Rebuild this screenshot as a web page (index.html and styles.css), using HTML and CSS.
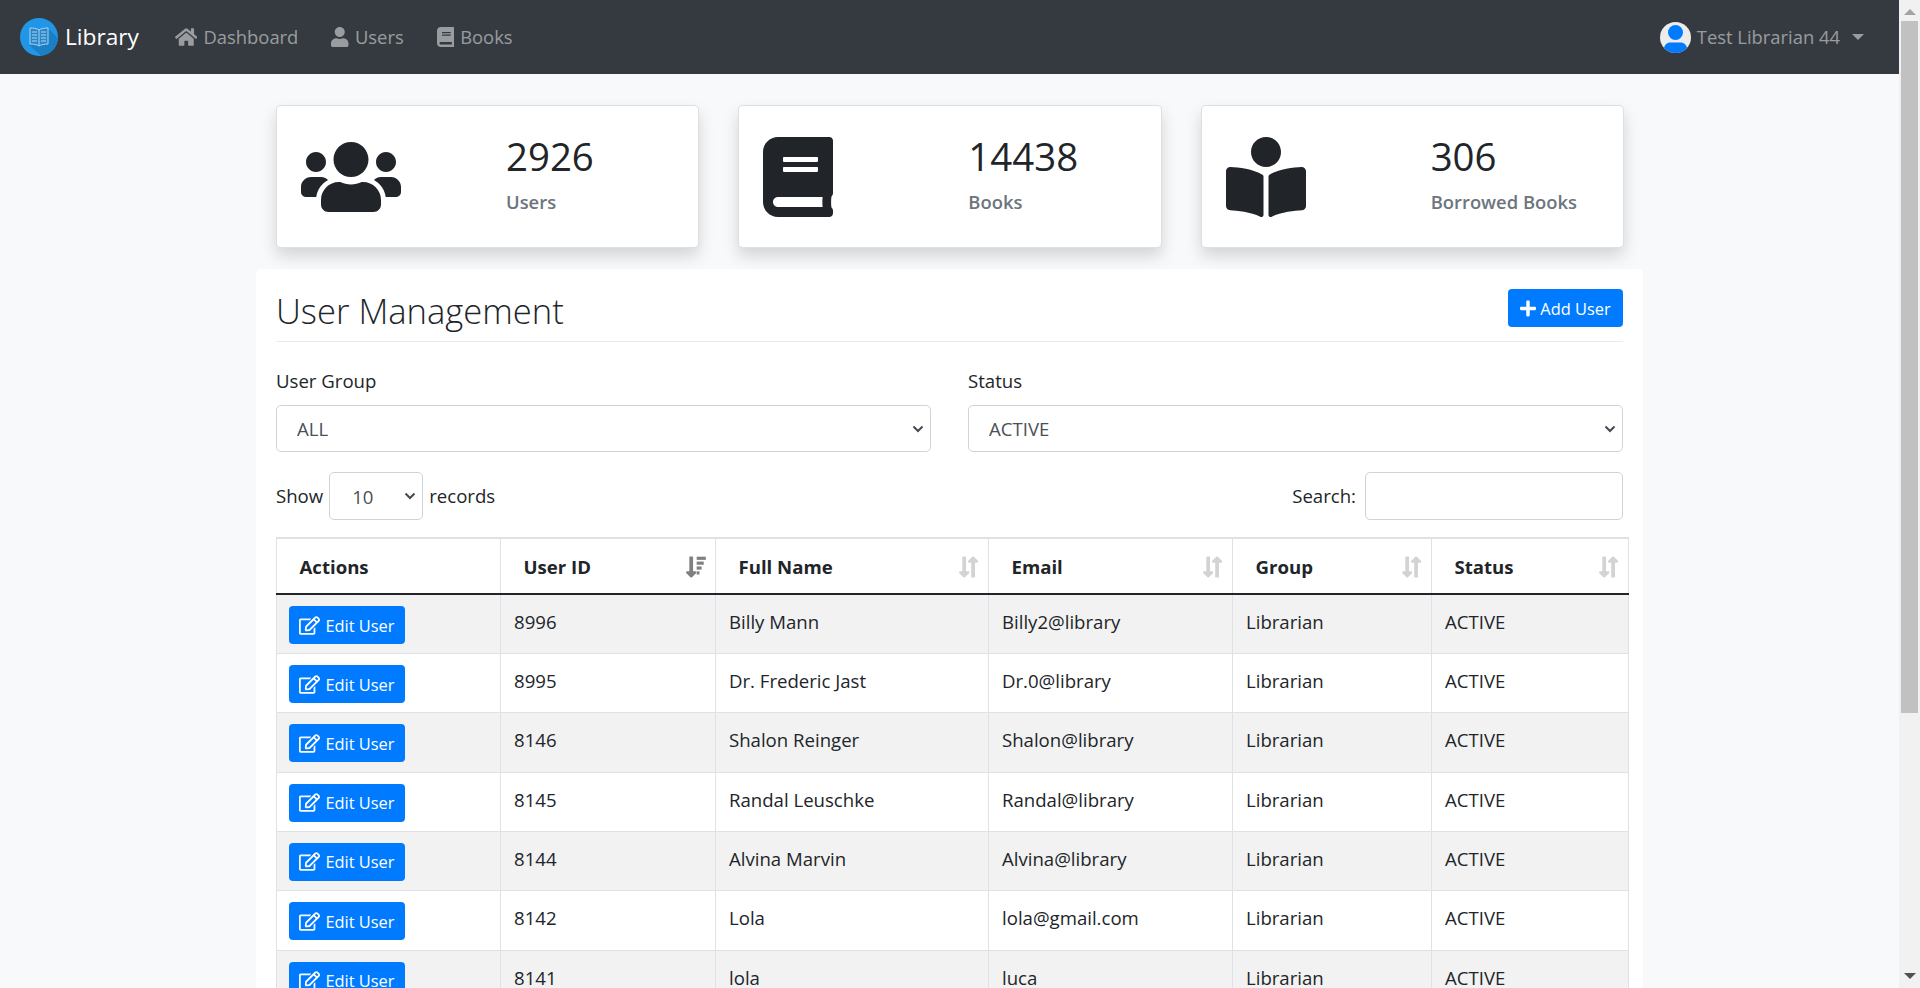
FILE: index.html
```html
<!doctype html>
<html>
<head>
<meta charset="utf-8">
<title>Library</title>
<link rel="stylesheet" href="styles.css">
</head>
<body>
<div class="page">
	<nav class="navbar">
		<a class="brand">
			<svg class="logo" viewBox="0 0 38 38">
				<defs><clipPath id="logoClip"><circle cx="19" cy="19" r="19"/></clipPath></defs>
				<circle cx="19" cy="19" r="19" fill="#2196e6"/>
				<path clip-path="url(#logoClip)" d="M9 27L29 11L42 24L26 42Z" fill="#1b7fc6"/>
				<path d="M19 12c-2-1.500-6-2-9-2v16c3 0 7 .5 9 2c2-1.500 6-2 9-2V10c-3 0-7 .5-9 2z" fill="#2a86c8" stroke="#a9d6f2" stroke-width="1"/>
				<path d="M19 12v16M12 14h5M12 17h5M12 20h5M12 23h5M21 14h5M21 17h5M21 20h5M21 23h5" fill="none" stroke="#a9d6f2" stroke-width="1"/>
			</svg>
			<span>Library</span>
		</a>
		<a class="nav-link">
			<svg class="nav-icon" viewBox="0 0 576 512"><path d="M280.37 148.26L96 300.11V464a16 16 0 0 0 16 16l112.06-.29a16 16 0 0 0 15.92-16V368a16 16 0 0 1 16-16h64a16 16 0 0 1 16 16v95.64a16 16 0 0 0 16 16.05L464 480a16 16 0 0 0 16-16V300L295.67 148.26a12.19 12.19 0 0 0-15.3 0zM571.6 251.47L488 182.56V44.05a12 12 0 0 0-12-12h-56a12 12 0 0 0-12 12v72.61L318.47 43a48 48 0 0 0-61 0L4.34 251.47a12 12 0 0 0-1.6 16.9l25.5 31A12 12 0 0 0 45.15 301l235.22-193.74a12.19 12.19 0 0 1 15.3 0L530.9 301a12 12 0 0 0 16.9-1.6l25.5-31a12 12 0 0 0-1.7-16.93z"/></svg>
			Dashboard
		</a>
		<a class="nav-link">
			<svg class="nav-icon" viewBox="0 0 448 512"><path d="M224 256c70.700 0 128-57.300 128-128S294.700 0 224 0 96 57.300 96 128s57.300 128 128 128zm89.600 32h-16.700c-22.200 10.200-46.900 16-72.900 16s-50.600-5.800-72.900-16h-16.700C60.200 288 0 348.200 0 422.400V464c0 26.500 21.500 48 48 48h352c26.500 0 48-21.500 48-48v-41.600c0-74.200-60.200-134.400-134.400-134.400z"/></svg>
			Users
		</a>
		<a class="nav-link">
			<svg class="nav-icon" viewBox="0 0 448 512"><path d="M448 360V24c0-13.300-10.700-24-24-24H96C43 0 0 43 0 96v320c0 53 43 96 96 96h328c13.300 0 24-10.700 24-24v-16c0-7.500-3.500-14.300-8.900-18.700-4.200-15.400-4.200-59.300 0-74.700 5.400-4.300 8.900-11.100 8.900-18.600zM128 134c0-3.300 2.700-6 6-6h212c3.300 0 6 2.700 6 6v20c0 3.300-2.700 6-6 6H134c-3.300 0-6-2.700-6-6v-20zm0 64c0-3.300 2.700-6 6-6h212c3.300 0 6 2.700 6 6v20c0 3.300-2.700 6-6 6H134c-3.300 0-6-2.700-6-6v-20zm253.400 250H96c-17.700 0-32-14.300-32-32 0-17.600 14.400-32 32-32h285.400c-1.900 17.100-1.900 46.900 0 64z"/></svg>
			Books
		</a>
		<a class="nav-user">
			<svg class="avatar" viewBox="0 0 31 31">
				<defs><clipPath id="avatarClip"><circle cx="15.500" cy="15.500" r="15.500"/></clipPath></defs>
				<circle cx="15.500" cy="15.500" r="15.500" fill="#ececec"/>
				<circle cx="15.500" cy="10.500" r="7.500" fill="#007bff"/>
				<path clip-path="url(#avatarClip)" d="M4 31v-4c0-4 3-6.500 6.500-6.500h10c3.500 0 6.500 2.500 6.500 6.500v4z" fill="#007bff"/>
			</svg>
			<span>Test Librarian 44</span>
			<i class="caret"></i>
		</a>
	</nav>

	<main class="content">
		<section class="stats">
			<div class="stat-card">
				<div class="stat-icon">
					<svg viewBox="0 0 640 512"><path d="M96 224c35.300 0 64-28.700 64-64s-28.700-64-64-64-64 28.700-64 64 28.700 64 64 64zm448 0c35.300 0 64-28.700 64-64s-28.700-64-64-64-64 28.700-64 64 28.700 64 64 64zm32 32h-64c-17.600 0-33.500 7.100-45.100 18.600 40.300 22.100 68.900 62 75.100 109.400h66c17.700 0 32-14.300 32-32v-32c0-35.300-28.700-64-64-64zm-256 0c61.900 0 112-50.100 112-112S381.900 32 320 32 208 82.100 208 144s50.100 112 112 112zm76.800 32h-8.300c-20.800 10-43.900 16-68.500 16s-47.600-6-68.500-16h-8.300C179.600 288 128 339.600 128 403.200V432c0 26.500 21.500 48 48 48h288c26.500 0 48-21.500 48-48v-28.800c0-63.600-51.600-115.200-115.200-115.200zm-223.700-13.400C161.500 263.100 145.600 256 128 256H64c-35.300 0-64 28.700-64 64v32c0 17.700 14.300 32 32 32h65.900c6.300-47.400 34.900-87.300 75.200-109.400z"/></svg>
				</div>
				<div class="stat-text">
					<div class="stat-num">2926</div>
					<div class="stat-label">Users</div>
				</div>
			</div>
			<div class="stat-card">
				<div class="stat-icon">
					<svg viewBox="0 0 448 512"><path d="M448 360V24c0-13.300-10.700-24-24-24H96C43 0 0 43 0 96v320c0 53 43 96 96 96h328c13.300 0 24-10.700 24-24v-16c0-7.500-3.500-14.300-8.900-18.700-4.200-15.400-4.200-59.300 0-74.700 5.400-4.300 8.900-11.100 8.900-18.600zM128 134c0-3.300 2.700-6 6-6h212c3.300 0 6 2.700 6 6v20c0 3.300-2.700 6-6 6H134c-3.300 0-6-2.700-6-6v-20zm0 64c0-3.300 2.700-6 6-6h212c3.300 0 6 2.700 6 6v20c0 3.300-2.700 6-6 6H134c-3.300 0-6-2.700-6-6v-20zm253.400 250H96c-17.700 0-32-14.300-32-32 0-17.600 14.400-32 32-32h285.400c-1.900 17.100-1.900 46.900 0 64z"/></svg>
				</div>
				<div class="stat-text">
					<div class="stat-num">14438</div>
					<div class="stat-label">Books</div>
				</div>
			</div>
			<div class="stat-card">
				<div class="stat-icon">
					<svg viewBox="0 0 512 512"><path d="M352 96c0-53.020-42.980-96-96-96s-96 42.980-96 96 42.980 96 96 96 96-42.980 96-96zM233.590 241.100c-59.330-36.320-155.430-46.300-203.790-49.050C13.550 191.130 0 203.510 0 219.140v222.800c0 14.330 11.590 26.280 26.490 27.050 43.660 2.290 131.990 10.680 193.040 41.430 9.370 4.720 20.480-1.710 20.480-11.870V252.560c-.01-4.670-2.320-8.950-6.420-11.460zm248.610-49.050c-48.350 2.740-144.460 12.730-203.780 49.050-4.100 2.510-6.410 6.960-6.410 11.630v245.790c0 10.190 11.140 16.630 20.540 11.900 61.040-30.720 149.320-39.110 192.970-41.400 14.900-.78 26.490-12.730 26.490-27.060V219.140c-.01-15.630-13.560-28.010-29.810-27.090z"/></svg>
				</div>
				<div class="stat-text">
					<div class="stat-num">306</div>
					<div class="stat-label">Borrowed Books</div>
				</div>
			</div>
		</section>

		<section class="panel">
			<div class="panel-head">
				<h1>User Management</h1>
				<button class="btn btn-add">
					<svg class="btn-icon plus" viewBox="0 0 448 512"><path d="M416 208H272V64c0-17.670-14.330-32-32-32h-32c-17.670 0-32 14.330-32 32v144H32c-17.670 0-32 14.330-32 32v32c0 17.670 14.330 32 32 32h144v144c0 17.670 14.330 32 32 32h32c17.670 0 32-14.330 32-32V304h144c17.670 0 32-14.330 32-32v-32c0-17.670-14.330-32-32-32z"/></svg>
					Add User
				</button>
			</div>

			<div class="filters">
				<label class="filter">
					<span>User Group</span>
					<select class="field"><option>ALL</option></select>
				</label>
				<label class="filter">
					<span>Status</span>
					<select class="field"><option>ACTIVE</option></select>
				</label>
			</div>

			<div class="table-tools">
				<label class="length">Show <select class="field field-small"><option>10</option></select> records</label>
				<label class="search">Search: <input class="field field-search" type="text"></label>
			</div>

			<table class="users">
				<colgroup>
					<col class="c1"><col class="c2"><col class="c3"><col class="c4"><col class="c5"><col class="c6">
				</colgroup>
				<thead>
					<tr>
						<th>Actions</th>
						<th><div class="th-in">User ID <svg class="sort sorted" viewBox="0 0 440 512"><path d="M168 345.941V44c0-6.627-5.373-12-12-12h-56c-6.627 0-12 5.373-12 12v301.941H41.941c-21.382 0-32.090 25.851-16.971 40.971l86.059 86.059c9.373 9.373 24.569 9.373 33.941 0l86.059-86.059c15.119-15.119 4.411-40.971-16.971-40.971H168z"/><rect x="245" y="36" width="195" height="68"/><rect x="245" y="140" width="150" height="68"/><rect x="245" y="244" width="105" height="68"/><rect x="245" y="348" width="60" height="68"/></svg></div></th>
						<th><div class="th-in">Full Name <svg class="sort" viewBox="0 0 440 512"><use href="#sortBoth"/></svg></div></th>
						<th><div class="th-in">Email <svg class="sort" viewBox="0 0 440 512"><use href="#sortBoth"/></svg></div></th>
						<th><div class="th-in">Group <svg class="sort" viewBox="0 0 440 512"><use href="#sortBoth"/></svg></div></th>
						<th><div class="th-in">Status <svg class="sort" viewBox="0 0 440 512"><use href="#sortBoth"/></svg></div></th>
					</tr>
				</thead>
				<tbody>
					<tr><td><button class="btn btn-edit"><svg class="btn-icon"><use href="#editIcon"/></svg>Edit User</button></td><td>8996</td><td>Billy Mann</td><td>Billy2@library</td><td>Librarian</td><td>ACTIVE</td></tr>
					<tr><td><button class="btn btn-edit"><svg class="btn-icon"><use href="#editIcon"/></svg>Edit User</button></td><td>8995</td><td>Dr. Frederic Jast</td><td>Dr.0@library</td><td>Librarian</td><td>ACTIVE</td></tr>
					<tr><td><button class="btn btn-edit"><svg class="btn-icon"><use href="#editIcon"/></svg>Edit User</button></td><td>8146</td><td>Shalon Reinger</td><td>Shalon@library</td><td>Librarian</td><td>ACTIVE</td></tr>
					<tr><td><button class="btn btn-edit"><svg class="btn-icon"><use href="#editIcon"/></svg>Edit User</button></td><td>8145</td><td>Randal Leuschke</td><td>Randal@library</td><td>Librarian</td><td>ACTIVE</td></tr>
					<tr><td><button class="btn btn-edit"><svg class="btn-icon"><use href="#editIcon"/></svg>Edit User</button></td><td>8144</td><td>Alvina Marvin</td><td>Alvina@library</td><td>Librarian</td><td>ACTIVE</td></tr>
					<tr><td><button class="btn btn-edit"><svg class="btn-icon"><use href="#editIcon"/></svg>Edit User</button></td><td>8142</td><td>Lola</td><td>lola@gmail.com</td><td>Librarian</td><td>ACTIVE</td></tr>
					<tr><td><button class="btn btn-edit"><svg class="btn-icon"><use href="#editIcon"/></svg>Edit User</button></td><td>8141</td><td>lola</td><td>luca</td><td>Librarian</td><td>ACTIVE</td></tr>
				</tbody>
			</table>
		</section>
	</main>
</div>

<div class="scrollbar">
	<i class="arrow-up"></i>
	<div class="thumb"></div>
	<i class="arrow-down"></i>
</div>

<svg class="defs" width="0" height="0">
	<symbol id="editIcon" viewBox="0 0 576 512"><path d="M402.300 344.900l32-32c5-5 13.700-1.500 13.700 5.700V464c0 26.500-21.500 48-48 48H48c-26.500 0-48-21.500-48-48V112c0-26.500 21.500-48 48-48h273.500c7.100 0 10.700 8.600 5.700 13.700l-32 32c-1.500 1.500-3.500 2.300-5.700 2.300H48v352h352V350.500c0-2.100.8-4.100 2.300-5.600zm156.600-201.800L296.300 405.700l-90.400 10c-26.200 2.900-48.500-19.200-45.600-45.600l10-90.400L432.900 17.100c22.900-22.900 59.900-22.900 82.700 0l43.200 43.200c22.900 22.900 22.900 60 .1 82.800zM460.100 174L402 115.900 216.200 301.800l-7.300 65.300 65.300-7.300L460.100 174zm64.800-79.700l-43.200-43.200c-4.100-4.100-10.800-4.100-14.800 0L436 82l58.100 58.100 30.900-30.900c4-4.200 4-10.800-.1-14.900z"/></symbol>
	<g id="sortBoth">
		<path d="M168 345.941V44c0-6.627-5.373-12-12-12h-56c-6.627 0-12 5.373-12 12v301.941H41.941c-21.382 0-32.090 25.851-16.971 40.971l86.059 86.059c9.373 9.373 24.569 9.373 33.941 0l86.059-86.059c15.119-15.119 4.411-40.971-16.971-40.971H168z"/>
		<path transform="translate(190 0)" d="M88 166.059V468c0 6.627 5.373 12 12 12h56c6.627 0 12-5.373 12-12V166.059h46.059c21.382 0 32.090-25.851 16.971-40.971l-86.059-86.059c-9.373-9.373-24.569-9.373-33.941 0l-86.059 86.059c-15.119 15.119-4.411 40.971 16.971 40.971H88z"/>
	</g>
</svg>
</body>
</html>
```

FILE: styles.css
```css
*{box-sizing:border-box;}
html,body{height:100%;}
body{margin:0; display:flex; height:100vh; overflow:hidden; background:#f8f9fa; color:#212529; font-family:"Open Sans","Noto Sans",sans-serif; font-size:18.6px; line-height:28px;}

.page{flex:1; min-width:0; height:100%; overflow:hidden;}
.defs{position:absolute;}

/* fake window scrollbar */
.scrollbar{width:21px; height:100%; background:#f1f1f1; display:flex; flex-direction:column; align-items:center;}
.arrow-up{margin-top:9px; border:6px solid transparent; border-top:0; border-bottom:6px solid #a3a3a3;}
.thumb{width:17px; height:692px; margin-top:6px; background:#c1c1c1;}
.arrow-down{margin-top:auto; margin-bottom:9px; border:6px solid transparent; border-bottom:0; border-top:6px solid #505050;}

/* navbar */
.navbar{height:74px; background:#343a40; display:flex; align-items:center; padding:0 35px 0 20px; color:rgba(255,255,255,.5);}
.brand{display:flex; align-items:center; color:#fff; font-size:22.7px; margin-right:36px;}
.logo{width:38px; height:38px; margin-right:7px;}
.nav-link{display:flex; align-items:center; margin-right:33px; font-size:18.4px;}
.nav-icon{height:20px; margin-right:6px; fill:rgba(255,255,255,.5);}
.nav-user{margin-left:auto; display:flex; align-items:center; font-size:18.4px;}
.avatar{width:31px; height:31px; margin-right:6px;}
.caret{margin-left:12px; border:6px solid transparent; border-bottom:0; border-top:6px solid rgba(255,255,255,.5);}

/* main */
.content{width:1387px; margin:0 auto; padding-top:31px;}
.stats{display:flex; gap:39px; padding:0 19px 0 20px; margin-bottom:21px;}
.stat-card{flex:1; height:143px; background:#fff; border:1px solid rgba(0,0,0,.125); border-radius:5px; box-shadow:0 8px 16px rgba(0,0,0,.15); display:flex; align-items:center;}
.stat-icon{width:229px; padding-left:24px;}
.stat-icon svg{display:block; height:80px; fill:#212529;}
.stat-num{font-size:38.4px; line-height:48px; font-weight:500; margin-top:-7px;}
.stat-label{font-size:18.4px; line-height:24px; font-weight:600; color:#6c757d; margin-top:10px;}

.panel{background:#fff; border-radius:5px; padding:20px 20px 0;}
.panel-head{display:flex; justify-content:space-between; align-items:flex-start; height:53px; border-bottom:1px solid #e9ecef;}
.panel-head h1{margin:0; font-size:34.6px; line-height:44px; font-weight:300;}

.btn{border:0; background:#007bff; color:#fff; border-radius:4px; font-family:inherit; font-size:16.4px; height:38px; display:flex; align-items:center; justify-content:center; padding:0;}
.btn-add{width:115px;}
.btn-edit{width:116px;}
.btn-icon{width:21px; height:19px; margin-right:5px; fill:#fff;}
.btn-icon.plus{width:16px; margin-right:4px;}

.filters{display:flex; gap:37px; margin-top:25px;}
.filter{flex:1; display:block;}
.filter span{display:block; margin-bottom:10px;}
.field{display:block; width:100%; height:47px; border:1px solid #ced4da; border-radius:5px; background-color:#fff; color:#495057; font-family:inherit; font-size:18.6px; padding:0 20px;}
select.field{appearance:none; -webkit-appearance:none; background-image:url("data:image/svg+xml,%3Csvg xmlns='http://www.w3.org/2000/svg' viewBox='0 0 12 8'%3E%3Cpath d='M1.500 1.500L6 6l4.500-4.500' fill='none' stroke='%23444b52' stroke-width='2'/%3E%3C/svg%3E"); background-repeat:no-repeat; background-position:right 6px center; background-size:12px 8px;}

.table-tools{display:flex; justify-content:space-between; align-items:center; margin-top:20px; height:48px;}
.length,.search{display:flex; align-items:center; gap:6px;}
.search{gap:9px;}
.field-small{width:94px; height:48px; padding:0 22px;}
.field-search{width:258px; height:48px;}

.users{width:1352px; margin-top:17px; border-collapse:collapse; table-layout:fixed; background:#fff;}
.c1{width:224px;} .c2{width:215px;} .c3{width:273px;} .c4{width:244px;} .c5{width:199px;} .c6{width:197px;}
.users th,.users td{border:1px solid #dee2e6; text-align:left;}
.users thead th{border-top:2px solid #dee2e6; border-bottom:2px solid #212529; height:56px; padding:2px 9px 0 22.5px; font-weight:700;}
.th-in{display:flex; justify-content:space-between; align-items:center;}
.sort{width:21px; height:24px; fill:#d3d3d3;}
.sorted{fill:#808080;}
.users td{height:59.33px; padding:13px 13px 9px; vertical-align:top;}
.users td:first-child{padding:11px 12px 9px;}
.users tbody tr:nth-child(odd){background:#f2f2f2;}
```
